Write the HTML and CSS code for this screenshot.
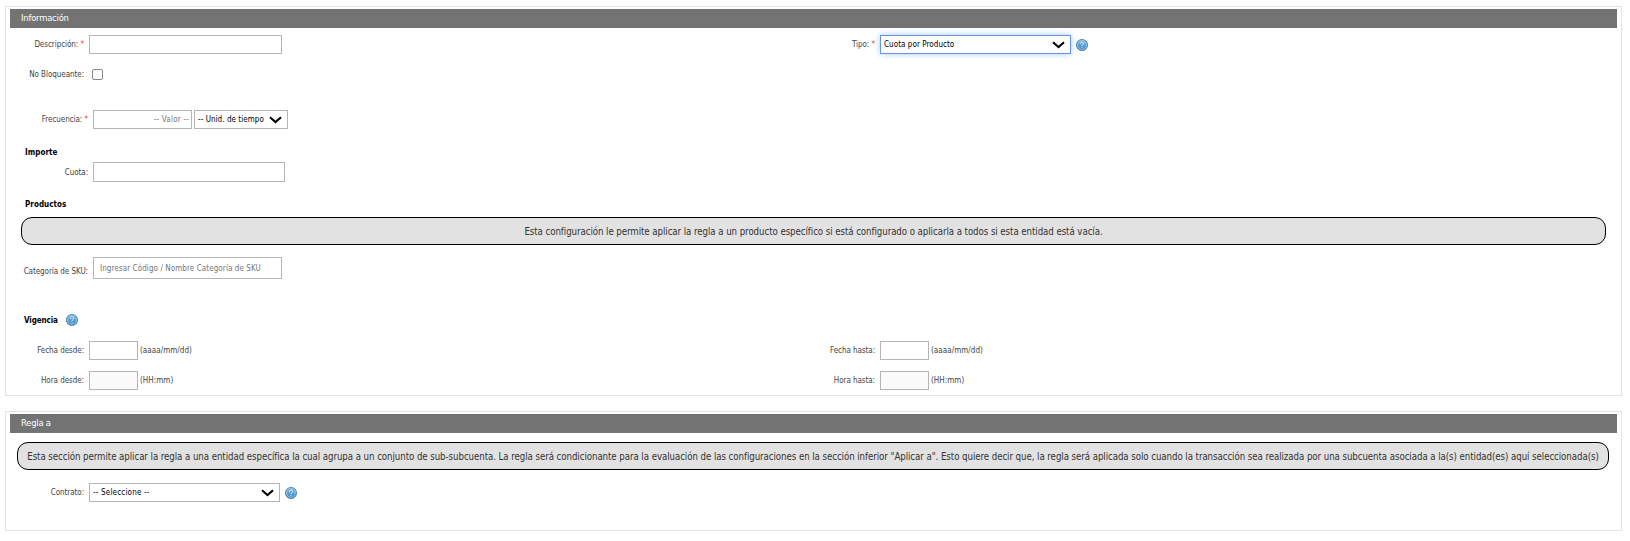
FILE: index.html
```html
<!DOCTYPE html>
<html lang="es">
<head>
<meta charset="utf-8">
<title>Regla</title>
<link rel="stylesheet" href="styles.css">
</head>
<body>
<svg class="defs" aria-hidden="true">
  <defs>
    <linearGradient id="ball" x1="0" y1="0" x2="0" y2="1">
      <stop offset="0" stop-color="#83b9df"/>
      <stop offset="1" stop-color="#3483c1"/>
    </linearGradient>
    <symbol id="help" viewBox="0 0 12 12">
      <circle cx="6" cy="6" r="5.6" fill="url(#ball)" stroke="#3f7fae" stroke-width=".8"/>
      <circle cx="6" cy="6" r="4.4" fill="none" stroke="#a9d2ec" stroke-width=".7"/>
      <path d="M4.4 4.8C4.4 2.6 7.7 2.7 7.6 4.7C7.6 5.8 6 5.8 6 7.2M6 8.2V9.2" fill="none" stroke="#eef7fc" stroke-width="1"/>
    </symbol>
    <symbol id="chevron" viewBox="0 0 13 8">
      <path d="M1 1.2L6.5 6L12 1.2" fill="none" stroke="#000" stroke-width="2.1"/>
    </symbol>
  </defs>
</svg>
<main>
  <section class="panel panel-info">
    <h2 class="bar"><span>Información</span></h2>
    <div class="row row-description">
      <div class="cell">
        <label class="label">Descripción: <b class="req">*</b></label>
        <input class="field wide" type="text">
      </div>
      <div class="cell">
        <label class="label">Tipo: <b class="req">*</b></label>
        <div class="select type focused"><span>Cuota por Producto</span><svg class="chevron"><use href="#chevron"/></svg></div>
        <svg class="help"><use href="#help"/></svg>
      </div>
    </div>
    <div class="row row-block">
      <label class="label">No Bloqueante:</label>
      <span class="check"></span>
    </div>
    <div class="row row-frequency">
      <label class="label shifted">Frecuencia: <b class="req">*</b></label>
      <div class="field value">-- Valor --</div>
      <div class="select unit"><span>-- Unid. de tiempo</span><svg class="chevron"><use href="#chevron"/></svg></div>
    </div>
    <h3 class="title title-amount"><span>Importe</span></h3>
    <div class="row row-quota">
      <label class="label shifted quota-label">Cuota:</label>
      <input class="field quota" type="text">
    </div>
    <h3 class="title title-products"><span>Productos</span></h3>
    <p class="notice notice-products"><span>Esta configuración le permite aplicar la regla a un producto específico si está configurado o aplicarla a todos si esta entidad está vacía.</span></p>
    <div class="row row-sku">
      <label class="label shifted sku-label">Categoría de SKU:</label>
      <div class="field sku"><span>Ingresar Código / Nombre Categoría de SKU</span></div>
    </div>
    <h3 class="title title-validity"><span>Vigencia</span><svg class="help"><use href="#help"/></svg></h3>
    <div class="row row-date">
      <div class="cell">
        <label class="label">Fecha desde:</label>
        <input class="field short" type="text"><span class="hint">(aaaa/mm/dd)</span>
      </div>
      <div class="cell">
        <label class="label">Fecha hasta:</label>
        <input class="field short" type="text"><span class="hint">(aaaa/mm/dd)</span>
      </div>
    </div>
    <div class="row row-time">
      <div class="cell">
        <label class="label">Hora desde:</label>
        <input class="field short" type="text" disabled><span class="hint">(HH:mm)</span>
      </div>
      <div class="cell">
        <label class="label">Hora hasta:</label>
        <input class="field short" type="text" disabled><span class="hint">(HH:mm)</span>
      </div>
    </div>
  </section>
  <section class="panel panel-rule">
    <h2 class="bar"><span>Regla a</span></h2>
    <p class="notice notice-rule"><span>Esta sección permite aplicar la regla a una entidad específica la cual agrupa a un conjunto de sub-subcuenta. La regla será condicionante para la evaluación de las configuraciones en la sección inferior "Aplicar a". Esto quiere decir que, la regla será aplicada solo cuando la transacción sea realizada por una subcuenta asociada a la(s) entidad(es) aquí seleccionada(s)</span></p>
    <div class="row row-contract">
      <label class="label">Contrato:</label>
      <div class="select type"><span class="dashed">-- Seleccione --</span><svg class="chevron"><use href="#chevron"/></svg></div>
      <svg class="help"><use href="#help"/></svg>
    </div>
  </section>
</main>
</body>
</html>
```
FILE: styles.css
```css
* { box-sizing: border-box; }
body {
  margin: 0;
  background: #fff;
  color: #444;
  font: 8px/10px "DejaVu Sans Condensed", "DejaVu Sans", sans-serif;
  font-stretch: condensed;
  letter-spacing: 0;
  white-space: nowrap;
  overflow: hidden;
}
.defs { position: absolute; width: 0; height: 0; }
main { padding: 6px 8px 0 5px; }
.panel { border: 1px solid #e4e4da; padding: 2px 4px; }
.panel-info { height: 390px; }
.panel-rule { height: 120px; margin-top: 15px; }
.bar {
  margin: 0;
  height: 19px;
  padding: 0 11px;
  background: #737373;
  color: #fff;
  font-size: 9.33px;
  font-weight: normal;
  line-height: 17px;
  letter-spacing: -0.2px;
}
.row { display: flex; height: 19px; }
.cell { display: flex; width: 791px; flex: none; }
.label {
  width: 74px;
  margin-right: 5px;
  flex: none;
  text-align: right;
  line-height: 19px;
  letter-spacing: -0.06px;
}
.label.shifted { width: 78px; }
.req { color: #f33; font-weight: normal; }
.field {
  margin: 0;
  padding: 0 2px;
  height: 19px;
  border: 1px solid #b5b5b5;
  border-radius: 0;
  background: #fff;
  color: #777;
  line-height: 18px;
}
.field:disabled { background: #fafafa; }
.wide { width: 193px; }
.value { width: 99px; text-align: right; letter-spacing: 0.2px; }
.quota { width: 192px; height: 20px; }
.quota-label { line-height: 21px; }
.sku { width: 189px; height: 22px; padding: 0 6px; line-height: 21px; letter-spacing: 0.08px; }
.sku-label { line-height: 29px; }
.short { width: 49px; }
.hint { margin-left: 2px; line-height: 19px; letter-spacing: 0.05px; }
.select {
  display: flex;
  align-items: center;
  justify-content: space-between;
  height: 19px;
  padding: 1px 5px 0 3px;
  border: 1px solid #b5b5b5;
  color: #000;
  letter-spacing: 0.05px;
}
.dashed { letter-spacing: 0.18px; }
.type { width: 191px; }
.unit { width: 94px; margin-left: 2px; }
.focused { border-color: #6495e0; box-shadow: 0 0 6px #a9c7f4; }
.chevron { width: 13px; height: 8px; flex: none; }
.help { width: 12px; height: 12px; margin: 4px 0 0 5px; flex: none; }
.check { width: 11px; height: 11px; margin: 4px 0 0 3px; border: 1px solid #858585; border-radius: 2px; }
.title {
  display: flex;
  margin: 0 0 0 15px;
  height: 12px;
  color: #000;
  font-size: 8px;
  line-height: 14px;
  letter-spacing: 0.05px;
}
.notice {
  display: flex;
  justify-content: center;
  margin: 0;
  height: 28px;
  border: 1px solid #000;
  border-radius: 11px;
  background: #e2e2e2;
  color: #333;
  font-size: 9.6px;
  line-height: 27px;
  letter-spacing: -0.055px;
}
.row-description { margin-top: 7px; }
.row-block { margin-top: 11px; }
.row-frequency { margin-top: 26px; }
.title-amount { margin-top: 17px; }
.row-quota { margin-top: 4px; height: 20px; }
.title-products { margin-top: 16px; }
.notice-products { margin: 7px 11px 0; }
.row-sku { margin-top: 12px; height: 22px; }
.title-validity { margin-top: 35px; margin-left: 14px; line-height: 13px; letter-spacing: -0.1px; }
.title-validity .help { margin: 0 0 0 8px; }
.row-date { margin-top: 15px; }
.row-time { margin-top: 11px; }
.notice-rule { margin: 9px 8px 0 7px; }
.row-contract { margin-top: 13px; }
```
